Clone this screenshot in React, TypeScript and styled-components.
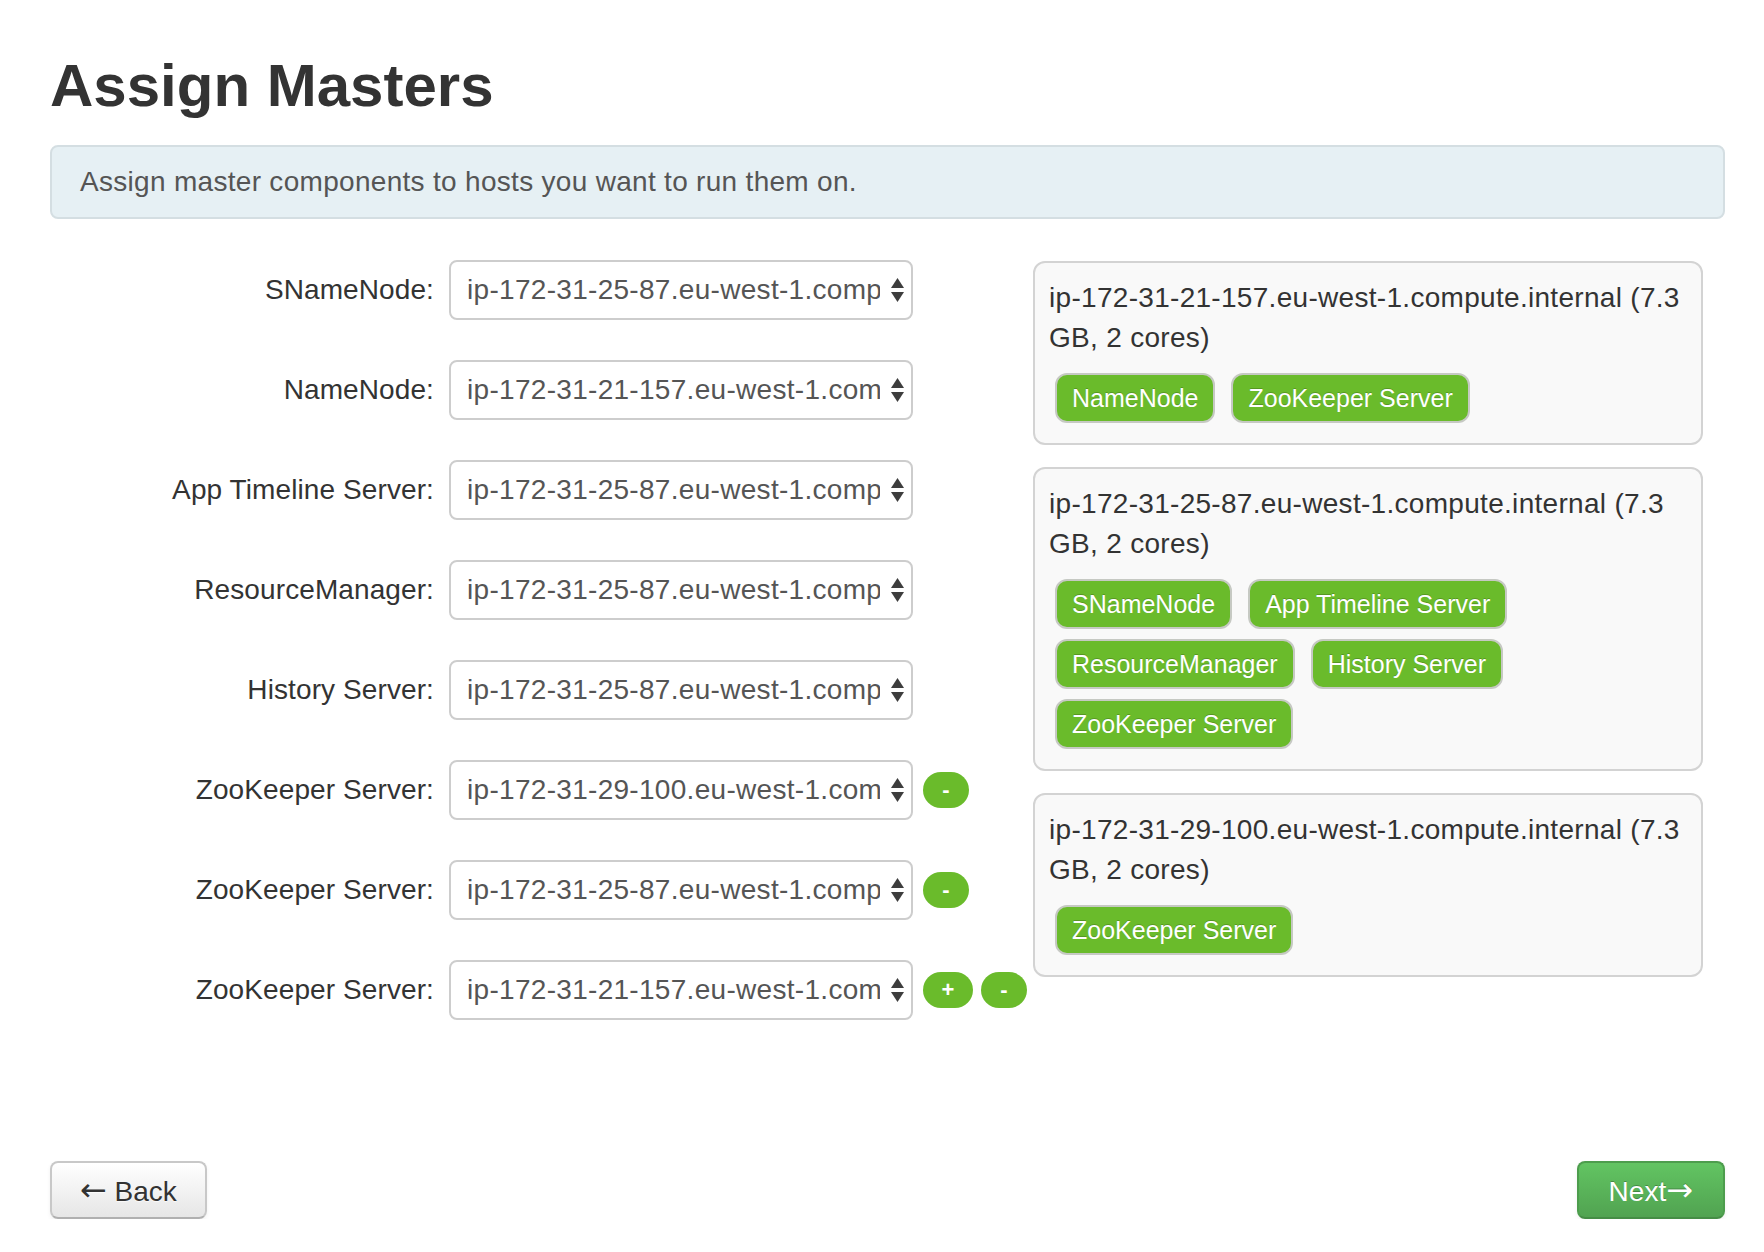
import React from "react";
import styled, { createGlobalStyle } from "styled-components";

const GlobalStyle = createGlobalStyle`
  body {
    margin: 0;
    background: #fff;
    font-family: "Liberation Sans", Arial, Helvetica, sans-serif;
    color: #333;
  }
`;

const Page = styled.div`
  padding: 53px 39px 0 50px;
  letter-spacing: 0.3px;
`;

const Title = styled.h2`
  margin: 0;
  font-size: 60px;
  line-height: 66px;
  font-weight: bold;
  color: #333;
  letter-spacing: 0;
`;

const Alert = styled.div`
  margin-top: 26px;
  padding: 15px 28px;
  background: #e6f0f4;
  border: 2px solid #d4dee2;
  border-radius: 8px;
  font-size: 28px;
  line-height: 40px;
  color: #555;
`;

const Main = styled.div`
  display: grid;
  grid-template-columns: 983px 670px;
  margin-top: 41px;
`;

const Form = styled.div`
  display: flex;
  flex-direction: column;
  gap: 40px;
`;

const FormRow = styled.div`
  display: flex;
  align-items: center;
  height: 60px;
`;

const FieldLabel = styled.div`
  width: 384px;
  margin-right: 15px;
  text-align: right;
  font-size: 28px;
  color: #333;
  letter-spacing: 0.1px;
`;

const SelectBox = styled.div`
  box-sizing: border-box;
  display: flex;
  align-items: center;
  width: 464px;
  height: 60px;
  padding: 0 7px 0 16px;
  background: #fff;
  border: 2px solid #cdcdcd;
  border-radius: 8px;
  font-size: 28px;
  color: #555;
`;

const SelectText = styled.span`
  flex: 1;
  overflow: hidden;
  white-space: nowrap;
`;

const Arrows = styled.svg`
  margin-left: 11px;
  flex-shrink: 0;
`;

const Buttons = styled.div`
  display: flex;
  gap: 8px;
  margin-left: 10px;
`;

const RoundButton = styled.div<{ wide?: boolean }>`
  width: ${({ wide }) => (wide ? "50px" : "46px")};
  height: 36px;
  border-radius: 18px;
  background: #6abb2b;
  color: #fff;
  font-size: 22px;
  font-weight: bold;
  line-height: 36px;
  text-align: center;
  letter-spacing: 0;
`;

const Hosts = styled.div`
  display: flex;
  flex-direction: column;
  gap: 22px;
  margin-top: 1px;
`;

const HostBox = styled.div`
  padding: 15px 14px 20px 14px;
  background: #f9f9f9;
  border: 2px solid #d3d3d3;
  border-radius: 12px;
  font-size: 28px;
  line-height: 40px;
  color: #333;
`;

const Tags = styled.div`
  display: flex;
  flex-wrap: wrap;
  gap: 10px 16px;
  margin: 15px 0 0 6px;
`;

const Tag = styled.span`
  box-sizing: border-box;
  height: 50px;
  padding: 0 15px;
  background: #6abb2b;
  border: 2px solid #c6c9c3;
  border-radius: 12px;
  color: #fff;
  font-size: 25px;
  line-height: 46px;
  letter-spacing: 0;
  text-shadow: 0 -1px 0 rgba(0, 0, 0, 0.2);
`;

const Footer = styled.div`
  display: flex;
  justify-content: space-between;
  margin-top: 141px;
`;

const NavButton = styled.div<{ primary?: boolean }>`
  box-sizing: border-box;
  height: 58px;
  padding: 0 ${({ primary }) => (primary ? "30px" : "28px")};
  border: 2px solid ${({ primary }) => (primary ? "#4d9d4d" : "#c8c8c8")};
  border-bottom-color: ${({ primary }) => (primary ? "#458d45" : "#b0b0b0")};
  border-radius: 8px;
  background: ${({ primary }) =>
    primary
      ? "linear-gradient(to bottom, #62c462, #51a351)"
      : "linear-gradient(to bottom, #ffffff, #e6e6e6)"};
  color: ${({ primary }) => (primary ? "#fff" : "#333")};
  text-shadow: ${({ primary }) =>
    primary ? "0 -1px 0 rgba(0,0,0,0.25)" : "0 1px 1px rgba(255,255,255,0.75)"};
  box-shadow: 0 2px 4px rgba(0, 0, 0, 0.06);
  font-size: 28px;
  line-height: 54px;
  letter-spacing: 0;
  white-space: nowrap;
`;

const Arrow = styled.span`
  font-family: "DejaVu Sans", sans-serif;
  font-size: 32px;
`;

const rows = [
  { label: "SNameNode:", host: "ip-172-31-25-87.eu-west-1.compute.internal" },
  { label: "NameNode:", host: "ip-172-31-21-157.eu-west-1.compute.internal" },
  { label: "App Timeline Server:", host: "ip-172-31-25-87.eu-west-1.compute.internal" },
  { label: "ResourceManager:", host: "ip-172-31-25-87.eu-west-1.compute.internal" },
  { label: "History Server:", host: "ip-172-31-25-87.eu-west-1.compute.internal" },
  { label: "ZooKeeper Server:", host: "ip-172-31-29-100.eu-west-1.compute.internal", minus: true },
  { label: "ZooKeeper Server:", host: "ip-172-31-25-87.eu-west-1.compute.internal", minus: true },
  { label: "ZooKeeper Server:", host: "ip-172-31-21-157.eu-west-1.compute.internal", plus: true, minus: true },
];

const hosts = [
  {
    name: "ip-172-31-21-157.eu-west-1.compute.internal (7.3 GB, 2 cores)",
    tags: ["NameNode", "ZooKeeper Server"],
  },
  {
    name: "ip-172-31-25-87.eu-west-1.compute.internal (7.3 GB, 2 cores)",
    tags: ["SNameNode", "App Timeline Server", "ResourceManager", "History Server", "ZooKeeper Server"],
  },
  {
    name: "ip-172-31-29-100.eu-west-1.compute.internal (7.3 GB, 2 cores)",
    tags: ["ZooKeeper Server"],
  },
];

const App = () => {
  return (
    <Page>
      <GlobalStyle />
      <Title>Assign Masters</Title>
      <Alert>Assign master components to hosts you want to run them on.</Alert>
      <Main>
        <Form>
          {rows.map((r, i) => (
            <FormRow key={i}>
              <FieldLabel>{r.label}</FieldLabel>
              <SelectBox>
                <SelectText>{r.host}</SelectText>
                <Arrows width="13" height="24" viewBox="0 0 13 24">
                  <polygon points="6.5,0 13,10 0,10" fill="#3d3d3d" />
                  <polygon points="0,14 13,14 6.5,24" fill="#3d3d3d" />
                </Arrows>
              </SelectBox>
              {(r.plus || r.minus) && (
                <Buttons>
                  {r.plus && <RoundButton wide>+</RoundButton>}
                  {r.minus && <RoundButton>-</RoundButton>}
                </Buttons>
              )}
            </FormRow>
          ))}
        </Form>
        <Hosts>
          {hosts.map((h, i) => (
            <HostBox key={i}>
              {h.name}
              <Tags>
                {h.tags.map((t, j) => (
                  <Tag key={j}>{t}</Tag>
                ))}
              </Tags>
            </HostBox>
          ))}
        </Hosts>
      </Main>
      <Footer>
        <NavButton>
          <Arrow>←</Arrow> Back
        </NavButton>
        <NavButton primary>
          Next<Arrow>→</Arrow>
        </NavButton>
      </Footer>
    </Page>
  );
};

export default App;
